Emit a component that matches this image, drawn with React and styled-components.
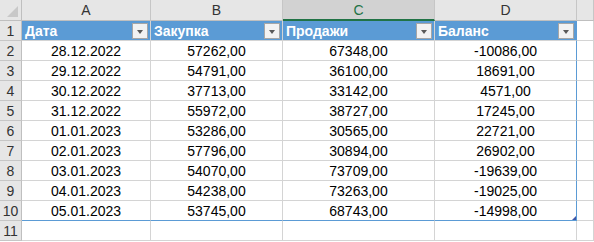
import styled, { createGlobalStyle } from 'styled-components';

const GlobalStyle = createGlobalStyle`
  body {
    margin: 0;
    background: #ffffff;
    font-family: 'Liberation Sans', Arial, sans-serif;
  }
`;

const Sheet = styled.div`
  display: grid;
  grid-template-columns: 22px 129px 132px 152px 142px 1fr;
  grid-auto-rows: 20px;
  grid-template-rows: 21px;
  width: 594px;
  height: 242px;
  overflow: hidden;
  font-size: 14px;
  color: #000;
`;

const Corner = styled.div`
  position: relative;
  background: #e6e6e6;
  border-right: 1px solid #bfbfbf;
  border-bottom: 1px solid #bfbfbf;

  &::after {
    content: '';
    position: absolute;
    right: 3px;
    bottom: 3px;
    width: 0;
    height: 0;
    border-left: 11px solid transparent;
    border-bottom: 11px solid #c8c8c8;
  }
`;

const ColHead = styled.div`
  display: flex;
  align-items: center;
  justify-content: center;
  background: ${(p) => (p.$active ? '#d2d2d2' : '#e6e6e6')};
  color: ${(p) => (p.$active ? '#217346' : '#333')};
  border-right: 1px solid #c6c6c6;
  border-bottom: ${(p) => (p.$active ? '2px solid #217346' : '1px solid #bfbfbf')};
  font-size: 14px;
`;

const RowHead = styled.div`
  display: flex;
  align-items: center;
  justify-content: center;
  background: #e6e6e6;
  color: #333;
  border-right: 1px solid #bfbfbf;
  border-bottom: 1px solid #c6c6c6;
  font-size: 14px;
`;

const HeadCell = styled.div`
  display: flex;
  align-items: center;
  justify-content: space-between;
  padding: 0 2px 0 3px;
  background: #5b9bd5;
  color: #ffffff;
  font-weight: bold;
  border-right: 1px solid ${(p) => (p.$last ? '#5b9bd5' : '#d4d4d4')};
  border-bottom: 1px solid #d4d4d4;
`;

const FilterButton = styled.span`
  position: relative;
  width: 14px;
  height: 14px;
  background: #f2f2f2;
  border: 1px solid #a6a6a6;

  &::after {
    content: '';
    position: absolute;
    left: 4px;
    top: 6px;
    border-left: 3px solid transparent;
    border-right: 3px solid transparent;
    border-top: 4px solid #595959;
  }
`;

const Cell = styled.div`
  position: relative;
  display: flex;
  align-items: center;
  justify-content: center;
  padding-top: 1px;
  border-right: 1px solid ${(p) => (p.$edge ? '#5b9bd5' : '#d4d4d4')};
  border-bottom: 1px solid ${(p) => (p.$bottom ? '#5b9bd5' : '#d4d4d4')};
`;

const ResizeHandle = styled.span`
  position: absolute;
  right: 0;
  bottom: 0;
  width: 0;
  height: 0;
  border-left: 4px solid transparent;
  border-bottom: 4px solid #3f57a8;
`;

const columns = ['A', 'B', 'C', 'D', ''];
const headers = ['Дата', 'Закупка', 'Продажи', 'Баланс'];

const rows = [
  ['28.12.2022', '57262,00', '67348,00', '-10086,00'],
  ['29.12.2022', '54791,00', '36100,00', '18691,00'],
  ['30.12.2022', '37713,00', '33142,00', '4571,00'],
  ['31.12.2022', '55972,00', '38727,00', '17245,00'],
  ['01.01.2023', '53286,00', '30565,00', '22721,00'],
  ['02.01.2023', '57796,00', '30894,00', '26902,00'],
  ['03.01.2023', '54070,00', '73709,00', '-19639,00'],
  ['04.01.2023', '54238,00', '73263,00', '-19025,00'],
  ['05.01.2023', '53745,00', '68743,00', '-14998,00'],
];

const App = () => {
  return (
    <>
      <GlobalStyle />
      <Sheet>
        <Corner />
        {columns.map((c) => (
          <ColHead key={c || 'E'} $active={c === 'C'}>
            {c}
          </ColHead>
        ))}

        <RowHead>1</RowHead>
        {headers.map((h, i) => (
          <HeadCell key={h} $last={i === headers.length - 1}>
            {h}
            <FilterButton />
          </HeadCell>
        ))}
        <Cell />

        {rows.map((r, ri) => {
          const isLast = ri === rows.length - 1;
          return [
            <RowHead key={`h${ri}`}>{ri + 2}</RowHead>,
            ...r.map((v, ci) => (
              <Cell key={`${ri}-${ci}`} $edge={ci === 3} $bottom={isLast}>
                {v}
                {isLast && ci === 3 && <ResizeHandle />}
              </Cell>
            )),
            <Cell key={`e${ri}`} />,
          ];
        })}

        <RowHead>11</RowHead>
        {columns.map((c) => (
          <Cell key={`last${c || 'E'}`} />
        ))}
      </Sheet>
    </>
  );
};

export default App;
